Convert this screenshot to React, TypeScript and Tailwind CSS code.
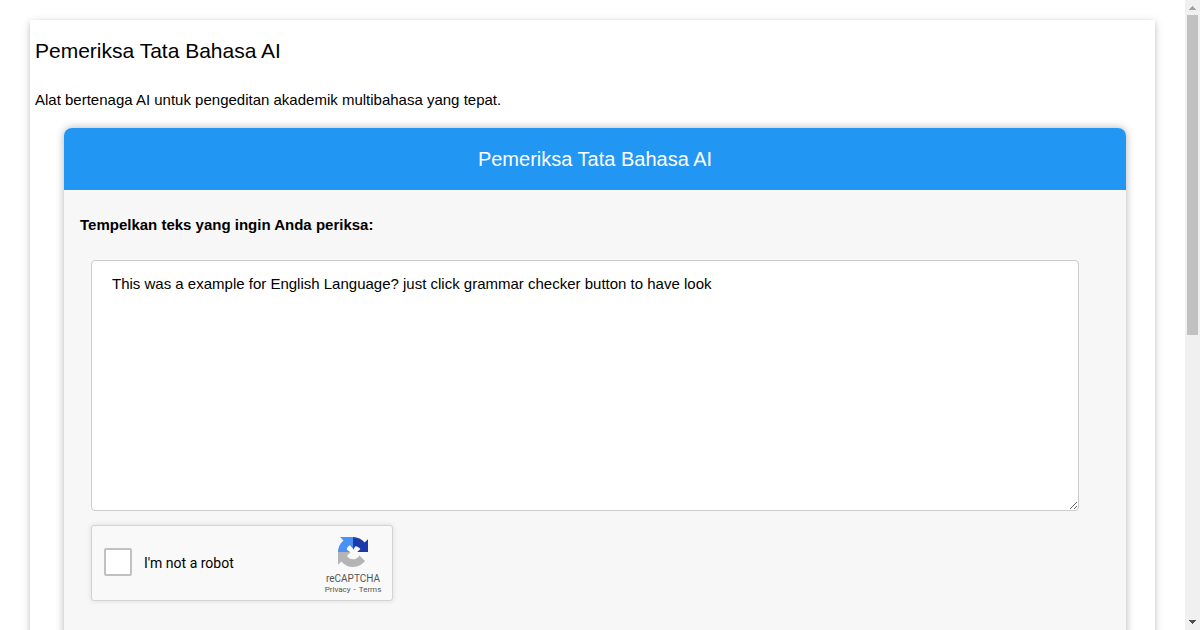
import React from "react";

function RecaptchaLogo() {
  return (
    <svg viewBox="0 0 64 64" className="h-[30px] w-[30px]" aria-hidden="true">
      <path
        fill="#1c3aa9"
        d="M64 32V4.7l-7.2 7.2C51 4.7 42 .1 32 .1V17l.1-.1v10.2l5-7.6c4.9.6 8.3 2.6 10.7 6.2L41 32z"
      />
      <path
        fill="#4a90f5"
        d="M32 0H4.6l7.2 7.2C4.6 13.1 0 22 0 32h17.5l8 0-7-5.5c1-4 3.4-7 7-8.8L32 25z"
      />
      <path
        fill="#b4b4b4"
        d="M0 32v27.3l7.2-7.2C13.1 59.3 22 64 32 64c10.4 0 19.6-5 25.5-12.7L45.8 39.4c-1.2 2.2-2.8 4-4.8 5.3-2 1.6-5 2.9-9 2.9-5.4-.3-10-3-13-7.3L27 32z"
      />
    </svg>
  );
}

function Recaptcha() {
  return (
    <div className="flex h-[76px] w-[302px] items-center rounded-[3px] border border-[#d3d3d3] bg-[#f9f9f9] pl-3 font-['Roboto',sans-serif] shadow-[0_0_4px_1px_rgba(0,0,0,0.08)]">
      <span className="flex pb-0.5">
        <input
          id="not-robot"
          type="checkbox"
          className="size-7 appearance-none rounded-[2px] border-2 border-[#c1c1c1] bg-white"
        />
      </span>
      <label htmlFor="not-robot" className="flex-1 pl-3 text-sm text-black">
        I'm not a robot
      </label>
      <div className="flex w-[78px] flex-col items-center pt-1.5 text-[#555]">
        <RecaptchaLogo />
        <span className="mt-1.5 text-[10px] leading-3">reCAPTCHA</span>
        <span className="flex gap-[3px] text-[8px] leading-[10px]">
          <a href="#privacy">Privacy</a>
          <span>-</span>
          <a href="#terms">Terms</a>
        </span>
      </div>
    </div>
  );
}

function ScrollRail() {
  return (
    <div aria-hidden="true" className="flex w-[15px] shrink-0 flex-col items-center justify-between bg-[#f0f0f0]">
      <div className="flex h-1/2 w-full flex-col items-center">
        <svg viewBox="0 0 15 15" className="size-[15px] shrink-0" shapeRendering="crispEdges">
          <path fill="#a3a3a3" d="M7 6h1v1h1v1h1v1h1v1H4V9h1V8h1V7h1z" />
        </svg>
        <div className="h-80 w-[11px] shrink-0 bg-[#c1c1c1]" />
      </div>
      <svg viewBox="0 0 15 15" className="size-[15px] shrink-0" shapeRendering="crispEdges">
        <path fill="#505050" d="M4 5h7v1h-1v1H9v1H8v1H7V8H6V7H5V6H4z" />
      </svg>
    </div>
  );
}

export default function App() {
  return (
    <div className="flex h-screen overflow-hidden bg-white font-['Liberation_Sans',Arial,sans-serif] text-[15px] text-black">
      <main className="min-w-0 flex-1 overflow-hidden px-[30px] pt-5">
        <section className="min-h-screen bg-white px-[5px] pt-4 shadow-[0_2px_5px_0_rgba(0,0,0,0.16),0_2px_10px_0_rgba(0,0,0,0.12)]">
          <h1 className="text-[21px] leading-[30px]">Pemeriksa Tata Bahasa AI</h1>
          <p className="mt-[22px] leading-6">Alat bertenaga AI untuk pengeditan akademik multibahasa yang tepat.</p>
          <div className="mt-4 mr-6 ml-[29px] min-h-screen rounded-lg bg-[#f7f7f7] shadow-[0_0_8px_0_rgba(0,0,0,0.3)]">
            <header className="rounded-t-lg bg-[#2196f3] py-4 text-center text-white">
              <h2 className="text-xl leading-[30px]">Pemeriksa Tata Bahasa AI</h2>
            </header>
            <form className="px-4 pt-6" onSubmit={(e) => e.preventDefault()}>
              <label htmlFor="text" className="block leading-[22px] font-bold">
                Tempelkan teks yang ingin Anda periksa:
              </label>
              <div className="mt-6 mr-[31px] ml-[11px] flex flex-col gap-[14px]">
                <textarea
                  id="text"
                  spellCheck={false}
                  className="block h-[251px] w-full resize rounded border border-[#ccc] bg-white px-5 py-3 leading-[22px]"
                  defaultValue="This was a example for English Language? just click grammar checker button to have look"
                />
                <Recaptcha />
              </div>
            </form>
          </div>
        </section>
      </main>
      <ScrollRail />
    </div>
  );
}
